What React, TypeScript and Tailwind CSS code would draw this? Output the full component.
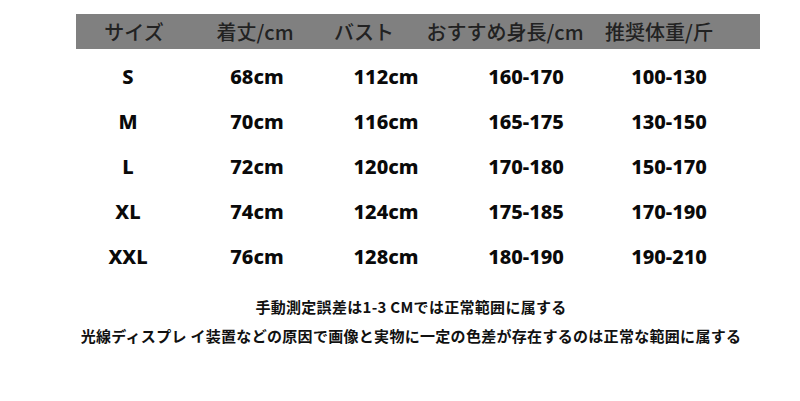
const headers = ["サイズ", "着丈/cm", "バスト", "おすすめ身長/cm", "推奨体重/斤"];

const rows = [
  ["S", "68cm", "112cm", "160-170", "100-130"],
  ["M", "70cm", "116cm", "165-175", "130-150"],
  ["L", "72cm", "120cm", "170-180", "150-170"],
  ["XL", "74cm", "124cm", "175-185", "170-190"],
  ["XXL", "76cm", "128cm", "180-190", "190-210"],
];

export default function App() {
  return (
    <div className="h-[401px] w-[800px] overflow-hidden bg-white">
      <div
        className="ml-[76px] mt-[14px] grid h-[35px] w-[684px] grid-cols-[116px_126px_92px_190px_118px] items-center bg-[#808080] text-[20px] font-medium leading-none text-[#222]"
        style={{ fontFamily: '"Noto Sans CJK JP", sans-serif' }}
      >
        {headers.map((h) => (
          <div key={h} className="whitespace-nowrap text-center">
            {h}
          </div>
        ))}
      </div>

      <div className="ml-[76px] mt-[5px]" style={{ fontFamily: '"Noto Sans", sans-serif' }}>
        {rows.map((r) => (
          <div
            key={r[0]}
            className="grid h-[45px] grid-cols-[104px_154px_104px_176px_110px] items-center text-[20px] font-extrabold leading-none text-[#0a0a0a]"
          >
            {r.map((c, i) => (
              <div key={i} className="text-center">
                {c}
              </div>
            ))}
          </div>
        ))}
      </div>

      <div
        className="mt-[13px] pl-[22px] text-center text-[15px] font-bold leading-[29px] tracking-[0.3px] text-[#111]"
        style={{ fontFamily: '"Noto Sans CJK JP", sans-serif' }}
      >
        <p>手動測定誤差は1-3 CMでは正常範囲に属する</p>
        <p className="whitespace-nowrap">光線ディスプレ イ装置などの原因で画像と実物に一定の色差が存在するのは正常な範囲に属する</p>
      </div>
    </div>
  );
}
